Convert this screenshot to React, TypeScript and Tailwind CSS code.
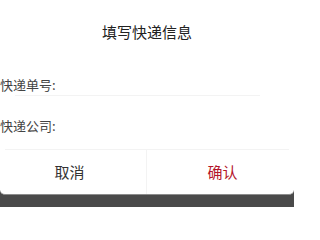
export default function App() {
  return (
    <div
      className="h-[207px] w-[294px] overflow-hidden bg-[#4a4a4a]"
      style={{ fontFamily: '"Noto Sans CJK SC", "Noto Sans", sans-serif' }}
    >
      <div className="flex h-[195px] flex-col rounded-b-[5px] border-b border-[#8c8c8c] bg-white">
        <div className="flex h-[64px] items-center justify-center text-[15px] leading-[20px] text-[#222]">
          填写快递信息
        </div>

        <div className="pt-[11px]">
          <div className="flex h-[20px] items-center text-[13px] leading-[20px] text-[#444]">
            快递单号:
          </div>
        </div>
        <div className="ml-[15px] h-px w-[245px] bg-[#f3f3f3]" />

        <div className="pt-[20px]">
          <div className="flex h-[20px] items-center text-[13px] leading-[20px] text-[#444]">
            快递公司:
          </div>
        </div>

        <div className="mx-[5px] mt-[13px] grid flex-1 grid-cols-2 border-t border-[#f3f3f3]">
          <button className="flex items-center justify-center border-r border-[#f3f3f3] pr-[12px] text-[15px] text-[#333]">
            取消
          </button>
          <button className="flex items-center justify-center pl-[9px] text-[15px] text-[#b4152b]">
            确认
          </button>
        </div>
      </div>
    </div>
  )
}
